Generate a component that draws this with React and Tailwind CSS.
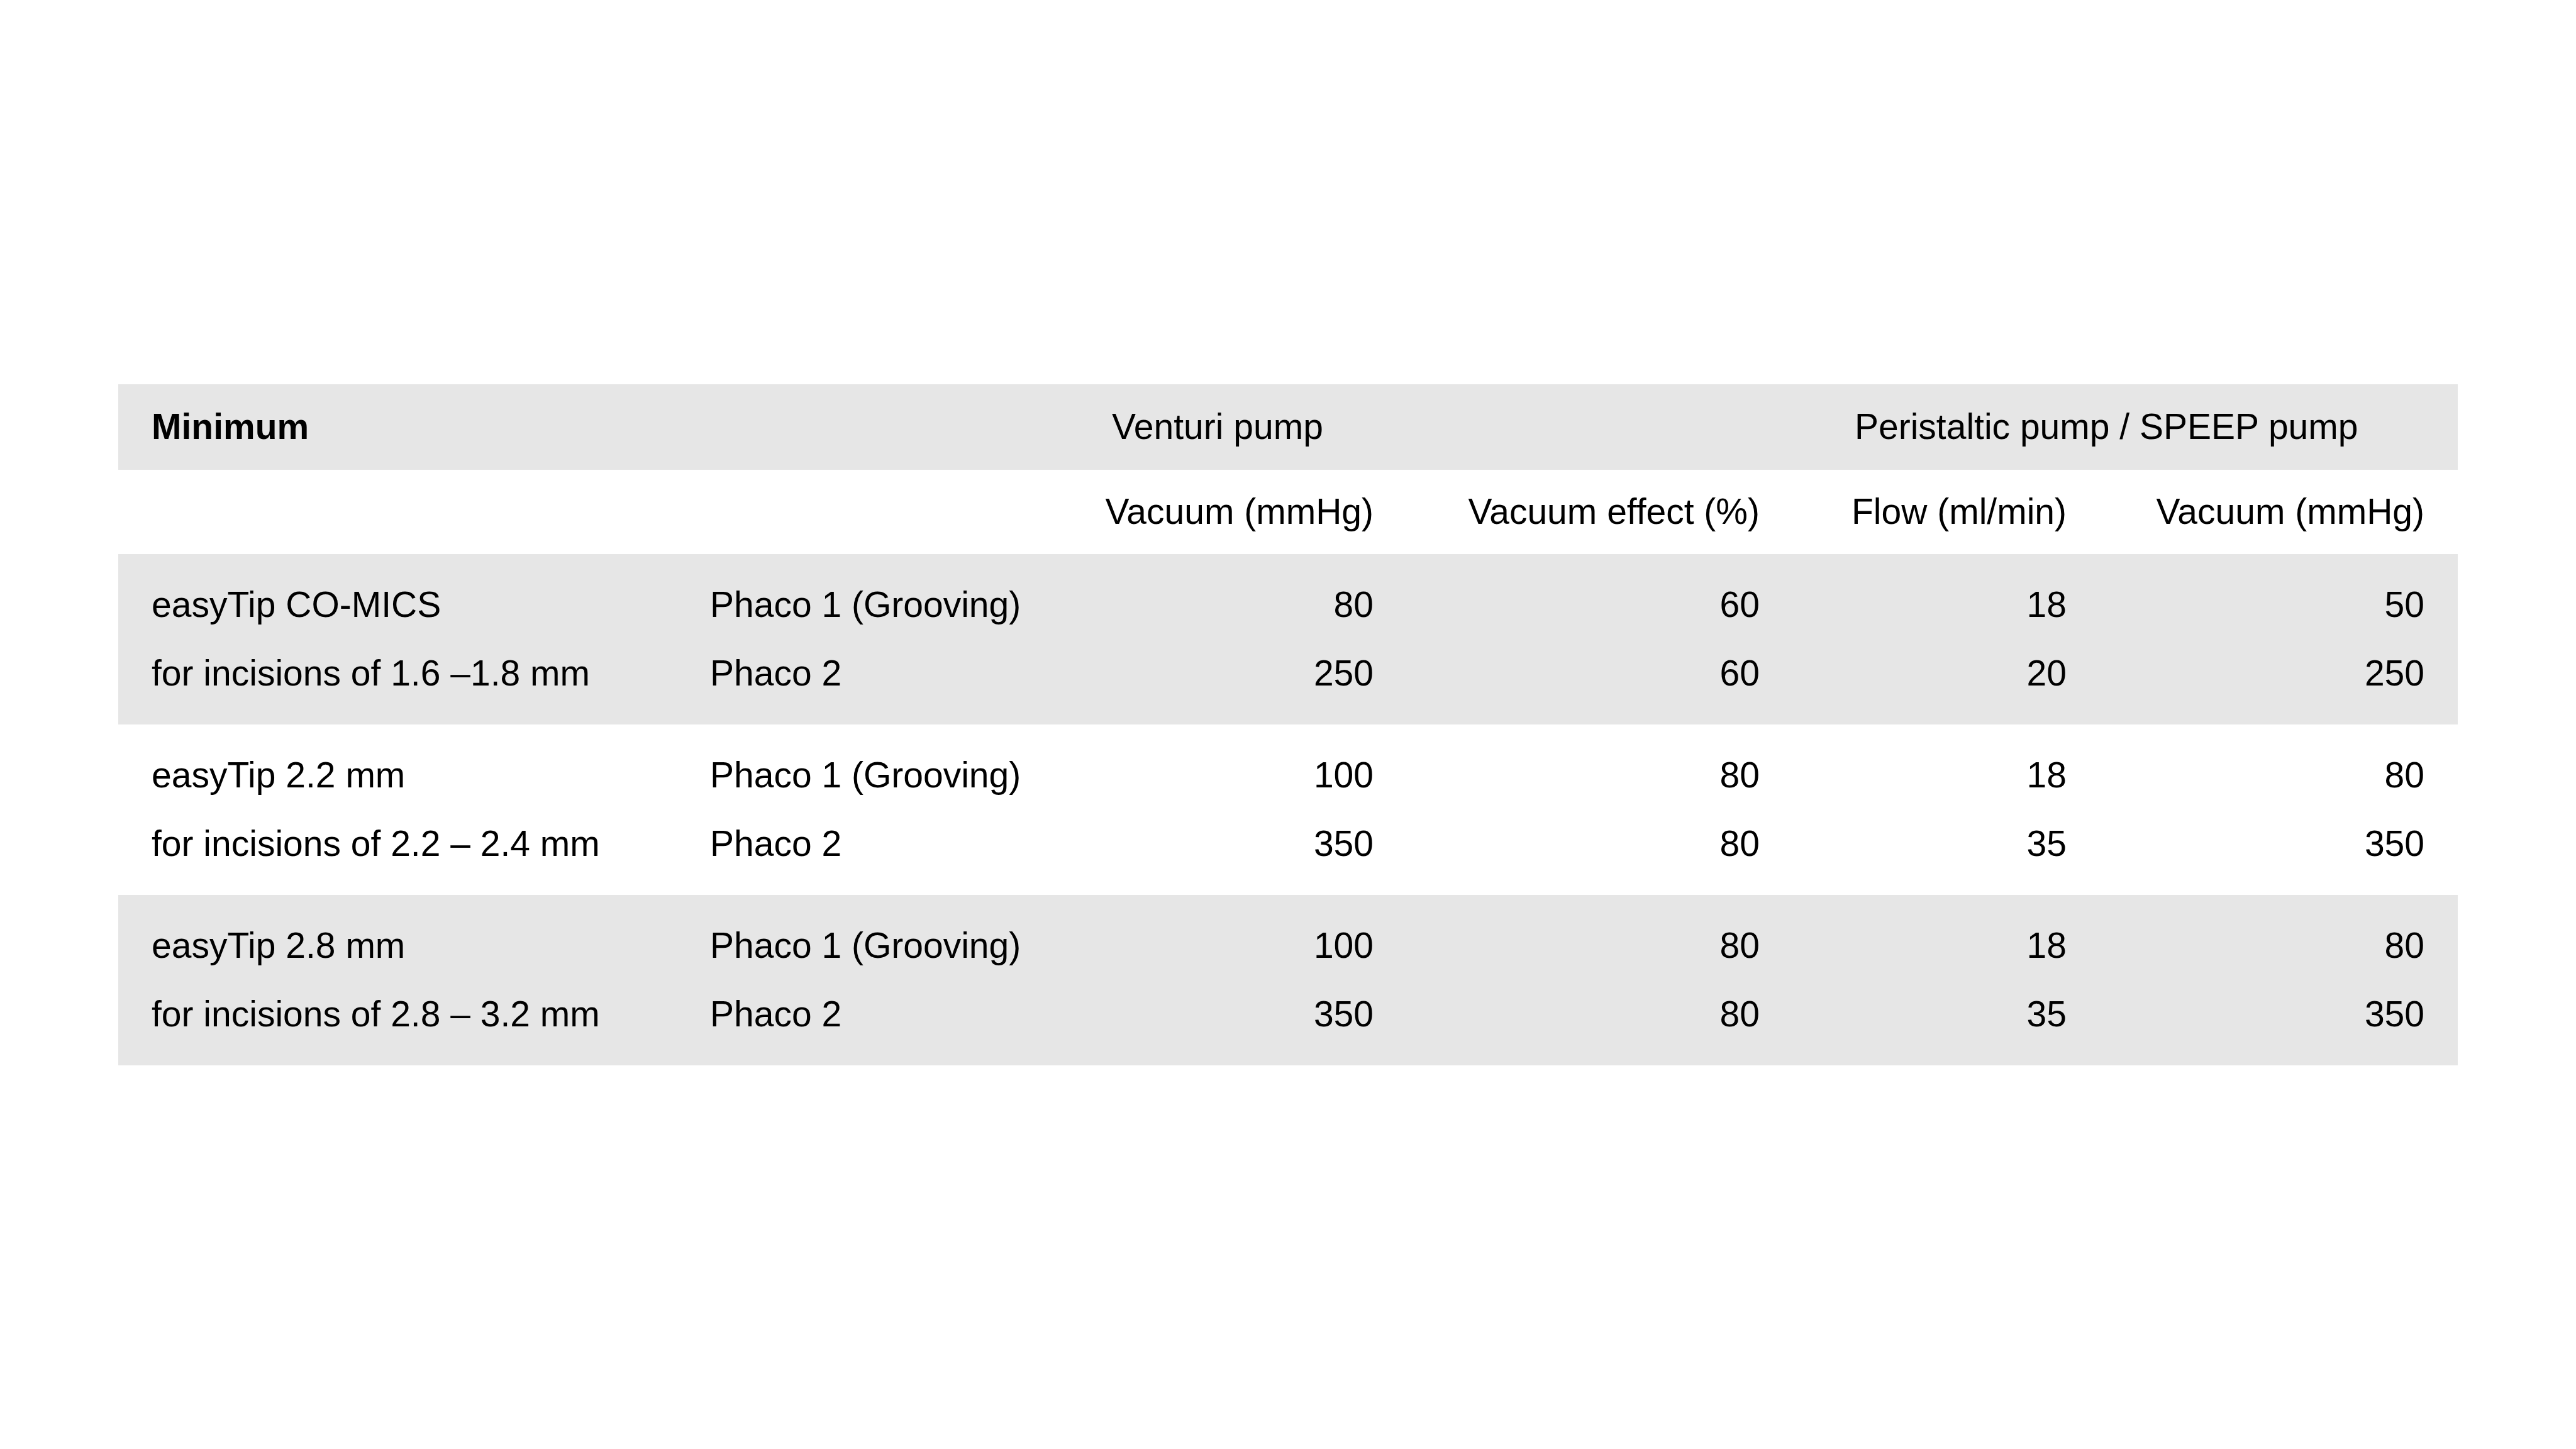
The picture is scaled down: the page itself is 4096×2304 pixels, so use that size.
import React from "react";

const grid =
  "grid grid-cols-[737px_488px_416px_463px_337px_418px] gap-x-[151px] px-[53px]";

const groups = [
  {
    name: "easyTip CO-MICS",
    note: "for incisions of 1.6 \u20131.8 mm",
    shade: true,
    rows: [
      ["Phaco 1 (Grooving)", "80", "60", "18", "50"],
      ["Phaco 2", "250", "60", "20", "250"],
    ],
  },
  {
    name: "easyTip 2.2 mm",
    note: "for incisions of 2.2 \u2013 2.4 mm",
    shade: false,
    rows: [
      ["Phaco 1 (Grooving)", "100", "80", "18", "80"],
      ["Phaco 2", "350", "80", "35", "350"],
    ],
  },
  {
    name: "easyTip 2.8 mm",
    note: "for incisions of 2.8 \u2013 3.2 mm",
    shade: true,
    rows: [
      ["Phaco 1 (Grooving)", "100", "80", "18", "80"],
      ["Phaco 2", "350", "80", "35", "350"],
    ],
  },
];

const units = ["Vacuum (mmHg)", "Vacuum effect (%)", "Flow (ml/min)", "Vacuum (mmHg)"];

const Group = ({ group }) => (
  <div
    className={`${grid} h-[271px] content-center ${
      group.shade ? "bg-[#e6e6e6]" : "bg-white"
    }`}
  >
    {group.rows.map((row, i) => (
      <React.Fragment key={i}>
        <div className="h-[109px] flex items-center whitespace-nowrap">
          {i === 0 ? group.name : group.note}
        </div>
        <div className="h-[109px] flex items-center whitespace-nowrap">
          {row[0]}
        </div>
        {row.slice(1).map((v, j) => (
          <div key={j} className="h-[109px] flex items-center justify-end">
            {v}
          </div>
        ))}
      </React.Fragment>
    ))}
  </div>
);

export default function App() {
  return (
    <div className="h-screen w-full bg-white flex items-center justify-center font-['Liberation_Sans',Arial,sans-serif] text-[57px] leading-none text-black">
      <div className="w-[3720px] flex flex-col">
        {/* header */}
        <div className={`${grid} h-[136px] items-center bg-[#e6e6e6]`}>
          <div className="font-bold col-span-2">Minimum</div>
          <div className="col-span-2 whitespace-nowrap">Venturi pump</div>
          <div className="col-span-2 whitespace-nowrap">
            Peristaltic pump / SPEEP pump
          </div>
        </div>

        {/* units */}
        <div className={`${grid} h-[134px] items-center bg-white`}>
          <div />
          <div />
          {units.map((u, i) => (
            <div key={i} className="flex justify-end whitespace-nowrap">
              {u}
            </div>
          ))}
        </div>

        {groups.map((g) => (
          <Group key={g.name} group={g} />
        ))}
      </div>
    </div>
  );
}
